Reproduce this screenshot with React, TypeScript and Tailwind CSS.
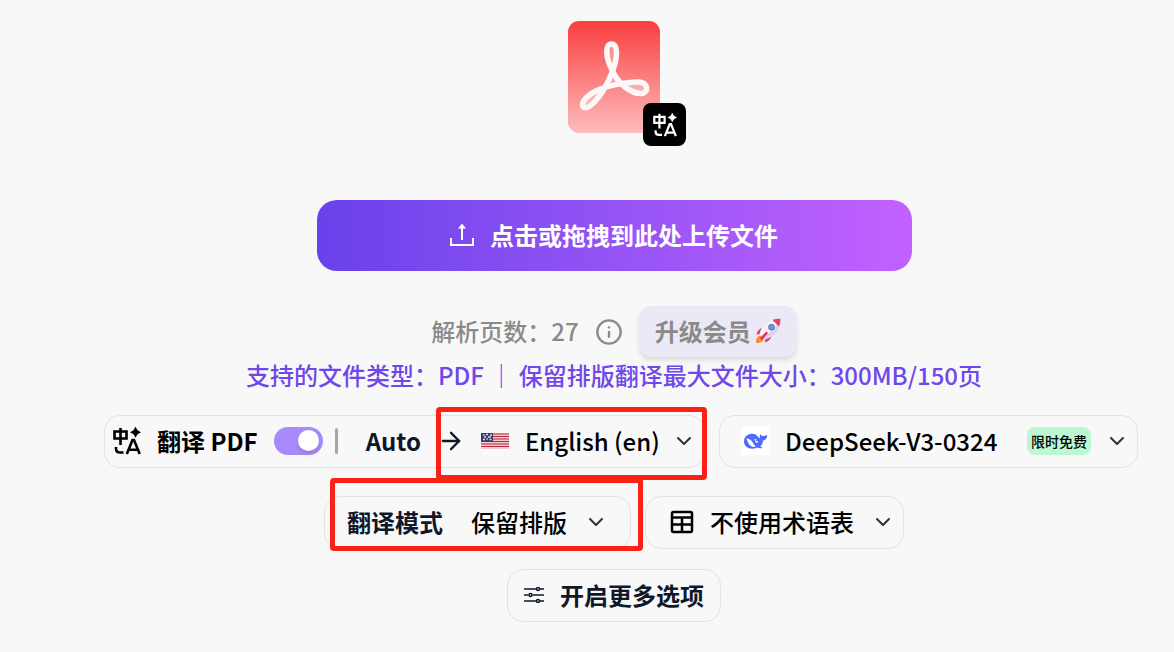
import type { ReactNode } from 'react';
import { ArrowRight, ChevronDown, Info } from 'lucide-react';

function TranslateIcon({ className }: { className?: string }) {
	return (
		<svg viewBox="0 0 28 28" fill="none" stroke="currentColor" strokeWidth="2.6" className={className} aria-hidden="true">
			<path d="M1.500 4.500h12v7h-12zM7.500 1v17M3 20v1.500q0 4 4 4h3.500" />
			<path d="M13.800 27 19.500 13h1.500l5.700 14M16 22.800h8.500" />
			<path d="M22.500-.3 24.500 3.200 28 5.200 24.500 7.200 22.500 10.700 20.500 7.200 17 5.200 20.500 3.200z" fill="currentColor" stroke="none" />
		</svg>
	);
}

function PdfIcon() {
	return (
		<svg viewBox="0 0 92 112" className="h-28 w-[92px]" aria-hidden="true">
			<defs>
				<linearGradient id="pdf" x1="0" y1="0" x2="0" y2="1">
					<stop offset="0" stopColor="#fa3f3f" />
					<stop offset="1" stopColor="#fdbcbe" />
				</linearGradient>
			</defs>
			<rect width="92" height="112" rx="11" fill="url(#pdf)" />
			<path
				d="M43.500 23C37 23 37 36 44.500 50C50 62 62 72.500 73 72.500C81 72.500 81 61 70 61C58 61 38 65 28 70C16 76 12 84 16 86.500C24 89 38 68 44.500 50C50 36 50 23 43.500 23Z"
				fill="#fff"
				fillOpacity="0.3"
				fillRule="evenodd"
				stroke="#fdf8f8"
				strokeWidth="5.500"
				strokeLinejoin="round"
			/>
		</svg>
	);
}

function UploadIcon() {
	return (
		<svg viewBox="0 0 24 24" fill="none" stroke="currentColor" strokeWidth="2" className="size-6" aria-hidden="true">
			<path d="M1 15v7h22v-7M12 17V4" />
			<path d="M12 0.500 16 5.500H8z" fill="currentColor" stroke="none" />
		</svg>
	);
}

function RocketIcon() {
	return (
		<svg viewBox="0 0 26 26" className="size-[26px]" aria-hidden="true">
			<path d="M6 17.500C2 18 1 21 1 25C5 25 8.500 24 9 20.500z" fill="#fb8b24" />
			<path d="M4.500 22c0-2 .8-3.500 2.500-4l1.500 1.500C8 21 6.500 22 4.500 22z" fill="#fcc53a" />
			<path d="M9 9.500C5.500 9.500 2.500 12.500 1.500 16.500l6-.5zM16.500 17c0 3.500-3 6.500-6.500 7.500l.5-7z" fill="#e5396b" />
			<path d="M4.500 16.500C6 8.500 12 2.500 19.500 1.500l5 5C23.500 14 17.500 20 9.500 21.500z" fill="#ddd3e6" />
			<path d="M4.500 16.500C6 8.500 12 2.500 19.500 1.500l3 3C20 11 14.500 16 7 19z" fill="#f6f0f8" />
			<path d="M17.500 2C20 .8 23 .5 25.300.7c.2 2.300 0 5.300-1.300 7.800z" fill="#ea3e62" />
			<path d="M4.500 20.500 11.500 13.500l1.500 1.500L7 22z" fill="#d92c5f" />
			<circle cx="16.500" cy="9.200" r="3.200" fill="#5b6f9c" />
			<circle cx="16.500" cy="9.200" r="2.200" fill="#54a5f0" />
		</svg>
	);
}

function FlagIcon() {
	return (
		<svg viewBox="0 0 28 16" className="h-4 w-7" aria-hidden="true">
			<rect width="28" height="16" fill="#f6c9ce" />
			<path d="M0 1h28M0 3.500h28M0 6h28M0 8.500h28M0 11h28M0 13.500h28" stroke="#b3293f" strokeWidth="1.200" />
			<rect width="12" height="9" fill="#3b3b6d" />
			<path d="M2 2h1.500M5 1.500h2M9 2h2M3 4h2M7 4h3M2 6.500h2M5.500 6h1.500M8.500 6.500h2" stroke="#d9d9e8" strokeWidth="1.300" />
		</svg>
	);
}

function DeepSeekIcon() {
	return (
		<svg viewBox="0 0 28 28" className="size-7 bg-white" aria-hidden="true">
			<path
				d="M3 14.500C3 9.500 7 6.700 11 6.800c1.800 0 2.500.7 4 .6.800 0 .6.800.3 1.100 2 1 2.700 2.500 4 3.200-.9-1.600-.5-3.500 0-5 .3 1.400 1.100 2.100 2.400 2.300 1.500.2 2.500-.9 4.500-.8-.1 3.300-1.800 5-4.200 5.300-.1 3-1.500 4.800-2.700 6 .8.500 1.700.8 2.200 1.200-1.600.8-3.600.6-5.100-.3C10.500 23.300 3 21 3 14.500z"
				fill="#4d6bfe"
			/>
			<path d="M5.300 11.500c3 0 5.200 1.800 6.500 4.200.9 1.600 2 3 3.200 3.900-3 .8-5-.1-6.700-2.200-1.400-1.800-2-4.200-3-5.900z" fill="#fff" />
			<path d="M13.500 11.700c1.800.2 3.200 1.700 3.700 3.900-1.600.4-3-.4-3.300-1.700z" fill="#fff" />
			<circle cx="15.300" cy="13.800" r=".8" fill="#4d6bfe" />
		</svg>
	);
}

function TableIcon() {
	return (
		<svg viewBox="0 0 24 24" fill="none" stroke="#000" strokeWidth="2.500" className="size-6" aria-hidden="true">
			<rect x="2" y="2" width="20" height="20" rx="1.500" />
			<path d="M2 7.500h20M2 14.500h20M12 7.500V22" />
		</svg>
	);
}

function SlidersIcon() {
	return (
		<svg viewBox="0 0 20 16" fill="none" stroke="currentColor" strokeWidth="1.500" className="h-4 w-5" aria-hidden="true">
			<path d="M0 2h12M16 2h4M0 8h4.500M8.500 8H20M0 14h12M16 14h4" />
			<circle cx="14" cy="2" r="1.500" />
			<circle cx="6.500" cy="8" r="1.500" />
			<circle cx="14" cy="14" r="1.500" />
		</svg>
	);
}

function Pill({ className, children }: { className: string; children: ReactNode }) {
	return <div className={`relative flex h-[53px] shrink-0 items-center rounded-2xl border border-[#e3e3e3] pb-0.5 ${className}`}>{children}</div>;
}

function SelectField({ id, label, value, badge }: { id: string; label: string; value: string; badge?: string }) {
	return (
		<div className="relative flex flex-1 items-center">
			<select id={id} aria-label={label} className="w-full appearance-none bg-transparent font-medium text-black outline-none">
				<option>{value}</option>
			</select>
			<div className="pointer-events-none absolute right-0 flex items-center gap-3.5">
				{badge && <span className="rounded-lg bg-[#bbf7d0] px-1 text-sm leading-7 font-medium text-black">{badge}</span>}
				<ChevronDown className="size-6 text-[#333]" />
			</div>
		</div>
	);
}

export default function App() {
	return (
		<main className="flex min-h-screen flex-col items-center bg-[#f8f8f8] pt-[21px] pb-7 pl-[54px] font-['Noto_Sans_CJK_SC','Noto_Sans',sans-serif] text-2xl leading-9 whitespace-nowrap text-[#0f172a]">
			<div className="relative">
				<PdfIcon />
				<div className="absolute -right-[26px] -bottom-[13px] flex size-[43px] items-center justify-center rounded-lg bg-black text-white">
					<TranslateIcon className="size-6" />
				</div>
			</div>

			<button className="mt-[67px] flex h-[71px] w-full max-w-[595px] items-center justify-center gap-4 rounded-[20px] bg-linear-to-r from-[#6941ea] to-[#c261ff] pb-0.5 font-bold text-white">
				<UploadIcon />
				点击或拖拽到此处上传文件
			</button>

			<div className="mt-[35px] flex items-center gap-4 font-medium text-[#8a8a8a]">
				<span className="pb-0.5">解析页数：27</span>
				<Info className="size-7" />
				<button className="flex h-[51px] items-center gap-1 rounded-xl bg-[#ece9f6] px-4 pb-0.5 font-bold shadow-md">
					升级会员
					<RocketIcon />
				</button>
			</div>
			<p className="font-medium text-[#7047eb]">支持的文件类型：PDF ｜ 保留排版翻译最大文件大小：300MB/150页</p>

			<div className="mt-[22px] flex justify-center gap-[14px] pl-[14px]">
				<Pill className="w-[601px] pr-2 pl-2">
					<label htmlFor="translate" className="flex items-center gap-4 font-bold text-black">
						<TranslateIcon className="size-7" />
						翻译 PDF
					</label>
					<input
						id="translate"
						type="checkbox"
						role="switch"
						defaultChecked
						className="ml-4 flex h-7 w-[49px] appearance-none items-center justify-end rounded-full bg-[#a78bfa] px-1 before:size-[21px] before:rounded-full before:bg-white before:shadow-md"
					/>
					<span className="ml-3 h-[26px] w-[3px] rounded-full bg-[#a5a5ab]" />
					<span className="ml-7 font-bold">Auto</span>
					<ArrowRight className="mx-4 size-7" />
					<FlagIcon />
					<div className="ml-4 flex flex-1">
						<SelectField id="language" label="目标语言" value="English (en)" />
					</div>
					<div className="pointer-events-none absolute -top-[9px] -right-[3px] h-[73px] w-[271px] rounded-sm border-5 border-[#fa2116]" />
				</Pill>
				<Pill className="w-[419px] pr-2 pl-[21px]">
					<DeepSeekIcon />
					<div className="ml-4 flex flex-1">
						<SelectField id="model" label="翻译模型" value="DeepSeek-V3-0324" badge="限时免费" />
					</div>
				</Pill>
			</div>

			<div className="mt-7 flex justify-center gap-[14px]">
				<Pill className="w-[307px] pr-[22px] pl-[22px]">
					<label htmlFor="mode" className="mr-7 font-bold">
						翻译模式
					</label>
					<SelectField id="mode" label="翻译模式" value="保留排版" />
					<div className="pointer-events-none absolute -top-[19px] -right-[13px] h-[73px] w-[313px] rounded-sm border-5 border-[#fa2116]" />
				</Pill>
				<Pill className="w-[259px] gap-4 pr-2 pl-6">
					<TableIcon />
					<SelectField id="glossary" label="术语表" value="不使用术语表" />
				</Pill>
			</div>

			<button className="mt-5 flex h-[53px] items-center gap-4 rounded-2xl border border-[#e3e3e3] px-4 pb-0.5 font-bold">
				<SlidersIcon />
				开启更多选项
			</button>
		</main>
	);
}
